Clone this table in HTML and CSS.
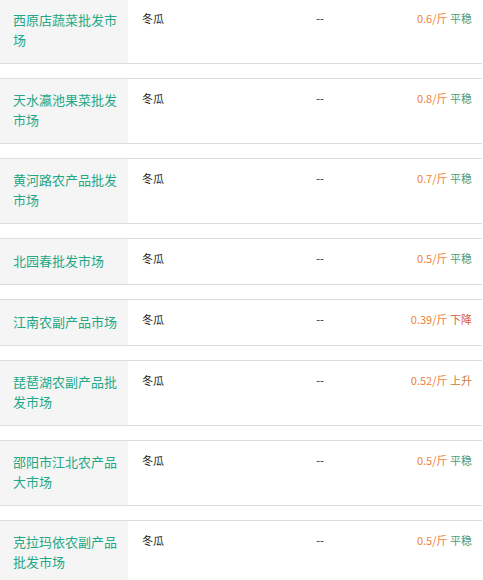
FILE: index.html
```html
<!DOCTYPE html>
<html lang="zh">
<head>
<meta charset="utf-8">
<link rel="stylesheet" href="styles.css">
</head>
<body>
<div class="list">
  <div class="row"><div class="name">西原店蔬菜批发市场</div><div class="kind">冬瓜</div><div class="dash">--</div><div class="price"><span class="num">0.6/斤</span> <span class="flat">平稳</span></div></div>
  <div class="row"><div class="name">天水瀛池果菜批发市场</div><div class="kind">冬瓜</div><div class="dash">--</div><div class="price"><span class="num">0.8/斤</span> <span class="flat">平稳</span></div></div>
  <div class="row"><div class="name">黄河路农产品批发市场</div><div class="kind">冬瓜</div><div class="dash">--</div><div class="price"><span class="num">0.7/斤</span> <span class="flat">平稳</span></div></div>
  <div class="row"><div class="name">北园春批发市场</div><div class="kind">冬瓜</div><div class="dash">--</div><div class="price"><span class="num">0.5/斤</span> <span class="flat">平稳</span></div></div>
  <div class="row"><div class="name">江南农副产品市场</div><div class="kind">冬瓜</div><div class="dash">--</div><div class="price"><span class="num">0.39/斤</span> <span class="down">下降</span></div></div>
  <div class="row"><div class="name">琵琶湖农副产品批发市场</div><div class="kind">冬瓜</div><div class="dash">--</div><div class="price"><span class="num">0.52/斤</span> <span class="up">上升</span></div></div>
  <div class="row"><div class="name">邵阳市江北农产品大市场</div><div class="kind">冬瓜</div><div class="dash">--</div><div class="price"><span class="num">0.5/斤</span> <span class="flat">平稳</span></div></div>
  <div class="row"><div class="name">克拉玛依农副产品批发市场</div><div class="kind">冬瓜</div><div class="dash">--</div><div class="price"><span class="num">0.5/斤</span> <span class="flat">平稳</span></div></div>
</div>
</body>
</html>
```
FILE: styles.css
```css
html, body {
  margin: 0;
  padding: 0;
  background: #fff;
}
body {
  font-family: "Noto Sans CJK SC", "Noto Sans", sans-serif;
  color: #333;
  overflow: hidden;
}
.list {
  display: flex;
  flex-direction: column;
  gap: 14px;
  margin-top: -2px;
}
.row {
  display: grid;
  grid-template-columns: 128px 142px 100px 1fr;
  border-top: 1px solid #dcdcdc;
  border-bottom: 1px solid #dcdcdc;
  margin-right: 1px;
}
.name {
  background: #f5f5f5;
  color: #22a885;
  font-size: 13px;
  line-height: 20px;
  padding: 11px 2px 13px 13px;
  display: flex;
  align-items: center;
}
.kind, .dash, .price {
  font-size: 11px;
  line-height: 18px;
  padding: 10px 0 17px;
}
.kind {
  padding-left: 14px;
  color: #222;
}
.dash {
  text-align: center;
  color: #222;
}
.price {
  text-align: right;
  padding-right: 10px;
}
.num { color: #f0823a; }
.flat { color: #4f9a78; }
.down { color: #e0603c; }
.up { color: #c8803c; }
```
